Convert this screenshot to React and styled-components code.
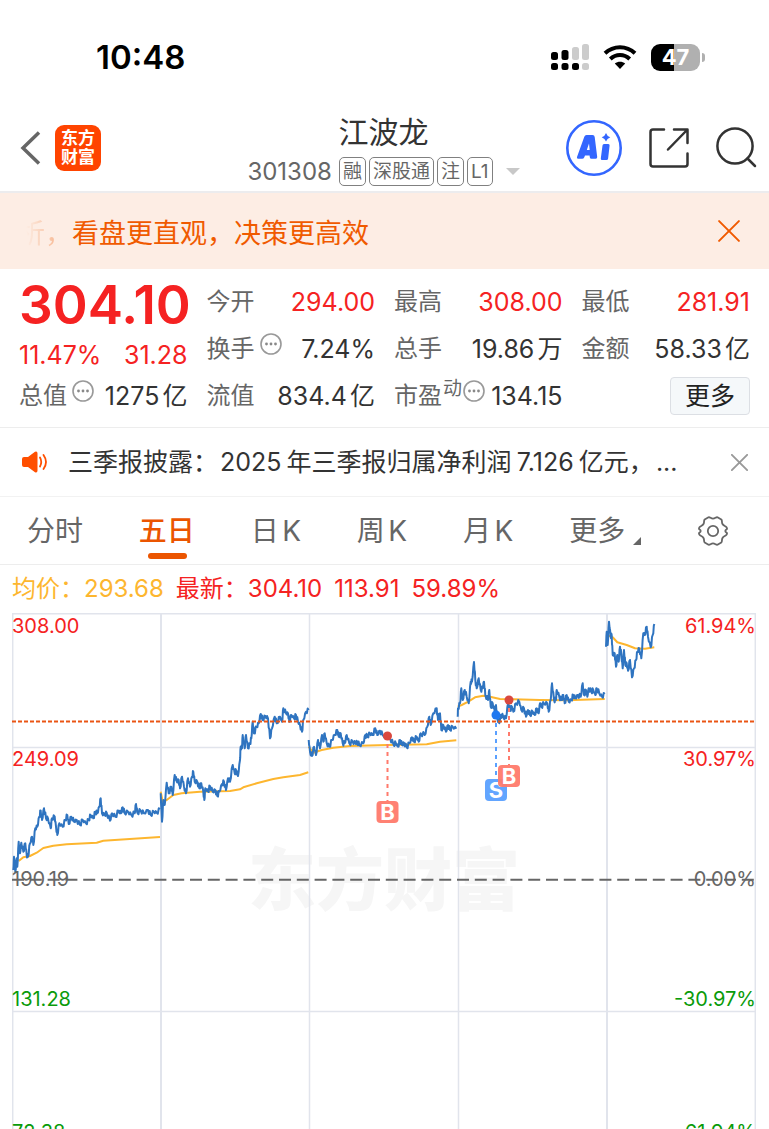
import React from "react";
import styled, { createGlobalStyle } from "styled-components";

const Global = createGlobalStyle`
  *, *::before, *::after { box-sizing: border-box; }
  body {
    margin: 0;
    background: #fff;
    color: #333;
    font-family: Inter, "Noto Sans CJK SC", sans-serif;
    text-autospace: normal;
    -webkit-font-smoothing: antialiased;
  }
  button {
    margin: 0;
    padding: 0;
    border: 0;
    background: none;
    color: inherit;
    font: inherit;
    cursor: pointer;
  }
  svg { display: block; }
`;

const Page = styled.div`
  display: flex;
  flex-direction: column;
  height: 100vh;
  overflow: hidden;
`;

const StatusBar = styled.div`
  display: flex;
  flex: none;
  align-items: center;
  justify-content: space-between;
  height: 104px;
  padding: 10px 69px 0 96px;
`;
const Clock = styled.time`
  color: #000;
  font-size: 33px;
  font-weight: 600;
  line-height: 40px;
`;
const StatusIcons = styled.div`
  display: flex;
  align-items: center;
  gap: 14px;
`;
const Battery = styled.div`
  position: relative;
  width: 49px;
  height: 27px;
  border-radius: 9px;
  background: linear-gradient(90deg, #000 47%, #b0b0b0 47%);
  color: #fff;
  font-size: 22px;
  font-weight: 700;
  line-height: 27px;
  text-align: center;
  &::after {
    content: "";
    position: absolute;
    top: 9px;
    right: -5px;
    width: 3px;
    height: 9px;
    border-radius: 0 4px 4px 0;
    background: #b0b0b0;
  }
`;

const Header = styled.header`
  display: grid;
  flex: none;
  grid-template-columns: 1fr auto 1fr;
  align-items: center;
  height: 89px;
  padding: 0 12px 0 20px;
  border-bottom: 2px solid #ececee;
`;
const HeaderSide = styled.div`
  display: flex;
  align-items: center;
  justify-content: ${(p) => (p.$end ? "flex-end" : "flex-start")};
  gap: ${(p) => (p.$end ? 27 : 14)}px;
`;
const Brand = styled.a`
  display: grid;
  place-content: center;
  width: 46px;
  height: 46px;
  border-radius: 9px;
  background: #ff4400;
  color: #fff;
  font-size: 17px;
  font-weight: 700;
  line-height: 19px;
  text-align: center;
  text-decoration: none;
`;
const Title = styled.div`
  display: flex;
  flex-direction: column;
  align-items: center;
  padding: 2px 10px 0 0;
`;
const StockName = styled.h1`
  margin: 0;
  color: #333;
  font-size: 30px;
  font-weight: 400;
  line-height: 46px;
`;
const CodeRow = styled.div`
  display: flex;
  align-items: center;
  gap: 3px;
  color: #666;
`;
const Code = styled.span`
  margin-right: 4px;
  font-size: 24px;
  line-height: 34px;
`;
const Tag = styled.span`
  height: 29px;
  padding: 0 3px;
  border: 1px solid #808080;
  border-radius: 5px;
  font-size: 19px;
  line-height: 27px;
`;
const Caret = styled.span`
  margin-left: 10px;
  border: 7px solid transparent;
  border-top-color: #c8c8c8;
  border-bottom: 0;
`;

const Notice = styled.section`
  display: flex;
  flex: none;
  align-items: center;
  justify-content: space-between;
  height: 76px;
  padding: 0 29px 0 18px;
  background: #fdede4;
  color: #f05a00;
`;
const NoticeText = styled.p`
  margin: 0;
  padding-top: 5px;
  font-size: 27px;
  line-height: 40px;
  white-space: nowrap;
`;
const Fading = styled.span`
  background: linear-gradient(90deg, rgba(240, 90, 0, 0) 8px, rgba(240, 90, 0, 0.45) 48px);
  background-clip: text;
  color: transparent;
`;

const Quote = styled.section`
  display: grid;
  flex: none;
  grid-template-columns: repeat(4, minmax(0, 1fr));
  grid-template-rows: repeat(3, 47px);
  column-gap: 19px;
  height: 159px;
  padding: 9px 19px 0 19px;
  border-bottom: 1px solid #ededed;
`;
const PriceBox = styled.div`
  display: flex;
  flex-direction: column;
  grid-row: 1 / 3;
  color: #f52222;
`;
const Price = styled.strong`
  font-size: 53px;
  font-weight: 600;
  line-height: 54px;
`;
const Change = styled.div`
  display: flex;
  justify-content: space-between;
  font-size: 25px;
  line-height: 46px;
`;
const Field = styled.div`
  display: flex;
  align-items: center;
  justify-content: space-between;
  white-space: nowrap;
`;
const Label = styled.span`
  display: flex;
  align-items: center;
  gap: 5px;
  color: #666;
  font-size: 24px;
  line-height: 36px;
`;
const Superscript = styled.span`
  align-self: flex-start;
  margin: 0 -4px;
  font-size: 19px;
  line-height: 22px;
`;
const Hint = styled.button`
  align-self: flex-start;
  padding-top: 2px;
`;
const Value = styled.span`
  color: ${(p) => (p.$up ? "#f52222" : "#333")};
  font-size: 25px;
  line-height: 36px;
`;
const MoreButton = styled.button`
  align-self: center;
  justify-self: end;
  width: 80px;
  height: 38px;
  border: 1px solid #dcdfe4;
  border-radius: 4px;
  background: #f5f8fa;
  color: #222;
  font-size: 25px;
  line-height: 36px;
`;

const News = styled.section`
  display: flex;
  flex: none;
  align-items: center;
  height: 69px;
  padding: 0 21px 0 22px;
  border-bottom: 1px solid #f2f2f2;
`;
const Headline = styled.p`
  flex: 1;
  margin: 0 20px 0 20px;
  color: #333;
  font-size: 25px;
  line-height: 36px;
  white-space: nowrap;
`;
const Figure = styled.span`
  margin: 0 2px;
`;

const Tabs = styled.nav`
  display: flex;
  flex: none;
  align-items: stretch;
  justify-content: space-between;
  height: 68px;
  padding: 0 40px 0 27px;
  border-bottom: 1px solid #ededed;
`;
const Tab = styled.button`
  position: relative;
  color: ${(p) => (p.$active ? "#eb5500" : "#666")};
  font-size: 28px;
  font-weight: ${(p) => (p.$active ? 500 : 400)};
  line-height: 40px;
  &::after {
    content: "";
    display: ${(p) => (p.$active ? "block" : "none")};
    position: absolute;
    bottom: 5px;
    left: calc(50% - 19px);
    width: 39px;
    height: 6px;
    border-radius: 3px;
    background: #eb5500;
  }
`;
const MoreTab = styled(Tab)`
  display: flex;
  align-items: center;
  gap: 8px;
`;
const Corner = styled.span`
  margin-top: 20px;
  border-bottom: 8px solid #666;
  border-left: 8px solid transparent;
`;

const Legend = styled.div`
  display: flex;
  flex: none;
  align-items: center;
  gap: 12px;
  height: 48px;
  padding: 0 12px;
  color: #f52222;
  font-size: 24px;
  line-height: 32px;
`;
const Average = styled.span`
  color: #fdb62f;
`;

const ChartBox = styled.section`
  position: relative;
  flex: none;
  height: 532px;
  margin: 0 13px 0 12px;
`;
const Plot = styled.svg`
  width: 100%;
  height: 100%;
`;
const AxisLabel = styled.span`
  position: absolute;
  top: ${(p) => p.$top}px;
  ${(p) => (p.$right ? "right: 0;" : "left: 0;")}
  color: ${(p) => p.$color};
  font-size: 20px;
  line-height: 24px;
`;

const HintIcon = () => (
  <svg width="22" height="22" viewBox="0 0 22 22" fill="none" stroke="#999">
    <circle cx="11" cy="11" r="10" strokeWidth="1.6" />
    <g fill="#888" stroke="none">
      <circle cx="6.5" cy="11" r="1.4" />
      <circle cx="11" cy="11" r="1.4" />
      <circle cx="15.5" cy="11" r="1.4" />
    </g>
  </svg>
);

const Cross = ({ size, color, width }) => (
  <svg width={size} height={size} viewBox="0 0 20 20" fill="none" stroke={color} strokeWidth={width} strokeLinecap="round">
    <path d="M1 1 19 19M19 1 1 19" />
  </svg>
);

const SignalIcon = () => (
  <svg width="38" height="28" viewBox="0 0 38 28">
    <g fill="#000">
      <rect x="0" y="9" width="7" height="8" rx="2.5" />
      <rect x="10.5" y="7" width="7" height="10" rx="2.5" />
      <rect x="0" y="20" width="7" height="7" rx="2.5" />
      <rect x="10.5" y="20" width="7" height="7" rx="2.5" />
      <rect x="21" y="20" width="7" height="7" rx="2.5" />
    </g>
    <g fill="#ccc">
      <rect x="21" y="4" width="7" height="13" rx="2.5" />
      <rect x="31" y="1" width="7" height="16" rx="2.5" />
      <rect x="31" y="20" width="7" height="7" rx="2.5" />
    </g>
  </svg>
);

const WifiIcon = () => (
  <svg width="34" height="26" viewBox="0 0 34 26" fill="none" stroke="#000" strokeWidth="4">
    <path d="M2 9.3C10.5 1.2 23.5 1.2 32 9.3" />
    <path d="M7.3 15C12.9 9.7 21.1 9.7 26.7 15" />
    <path d="M17 25 11.8 19.6C14.8 17 19.2 17 22.2 19.6Z" fill="#000" stroke="none" />
  </svg>
);

const AiIcon = () => (
  <svg width="56" height="56" viewBox="0 0 56 56">
    <circle cx="28" cy="28" r="26.7" fill="none" stroke="#3366ff" strokeWidth="2.6" />
    <g fill="#3366ff">
      <path
        fillRule="evenodd"
        d="M20.5 15h6q2 0 2.200 1.900l2.500 20.100q.2 1.800-1.500 1.800h-4.200q-1.500 0-1.700-1.500l-.2-1.700h-4.600l-.7 1.700q-.6 1.500-2.200 1.500h-3.900q-1.900 0-1.200-1.800l7.300-20.300q.6-1.700 2.200-1.700zM23 23.500l-2.200 6.500h2.900z"
      />
      <path d="M38 24h4.300q1.500 0 1.300 1.500l-1.500 13q-.2 1.500-1.600 1.500h-4.300q-1.600 0-1.400-1.500l1.700-13q.2-1.500 1.500-1.500z" />
      <path d="M40 13q1 3.200 4.300 4.300-3.300 1.100-4.300 4.300-1-3.200-4.300-4.300 3.300-1.100 4.300-4.300z" />
    </g>
  </svg>
);

const ShareIcon = () => (
  <svg width="40" height="40" viewBox="0 0 40 40" fill="none" stroke="#333" strokeWidth="2.5" strokeLinecap="round" strokeLinejoin="round">
    <path d="M15 1.5H4Q1.500 1.500 1.500 4V36Q1.500 38.500 4 38.500H36Q38.500 38.500 38.500 36V25.500" />
    <path d="M25 1.500H38.500V15M38 2 19 21.500" />
  </svg>
);

const SearchIcon = () => (
  <svg width="41" height="41" viewBox="0 0 41 41" fill="none" stroke="#333" strokeWidth="2.5" strokeLinecap="round">
    <circle cx="19" cy="19" r="17.6" />
    <path d="M31.500 31.500 39 39" />
  </svg>
);

const SpeakerIcon = () => (
  <svg width="26" height="22" viewBox="0 0 26 22">
    <path d="M2 6h4l7-5.200q2.500-.8 2.500 1.700v17q0 2.500-2.500 1.700L6 16H2q-2 0-2-2V8q0-2 2-2z" fill="#ff4f00" />
    <path d="M18 6.500q2.500 4.500 0 9M21.500 4q5 7 0 14" fill="none" stroke="#ff4f00" strokeWidth="1.8" strokeLinecap="round" />
  </svg>
);

const GearIcon = () => (
  <svg width="32" height="30" viewBox="0 0 32 30" fill="none" stroke="#666" strokeWidth="1.8" strokeLinejoin="round">
    <path d="M11.500 1.300C13 .8 13.800 2.600 16 2.600S19 .8 20.500 1.300L24.300 3.500C25.500 4.600 24.400 6 25.500 8S28.500 9.800 29.500 11.200C31.300 13.800 28.300 13 28.300 15S31.300 16.200 29.500 18.800C28.500 20.200 26.600 20 25.500 22S25.500 25.400 24.300 26.500L20.500 28.700C19 29.200 18.200 27.400 16 27.400S13 29.200 11.500 28.700L7.700 26.500C6.500 25.400 7.600 24 6.500 22S3.500 20.200 2.500 18.800C.7 16.200 3.700 17 3.700 15S.7 13.800 2.500 11.200C3.500 9.800 5.400 10 6.500 8S6.500 4.600 7.700 3.500Z" />
    <circle cx="16" cy="15" r="5.200" />
  </svg>
);

/* Samples are stored as x,y pairs on a grid three times finer than the plot. */
const parse = (text, shift) =>
  text.split(" ").map((pair) => {
    const [x, y] = pair.split(",").map(Number);
    return [(x + shift) / 3 - 12, y / 3 - 13];
  });

const toPath = (points) => "M" + points.map(([x, y]) => x.toFixed(1) + " " + y.toFixed(1)).join("L");

const withTicks = (points) => {
  const out = [];
  points.forEach(([x, y], i) => {
    out.push([x, y]);
    const next = points[i + 1];
    if (!next) return;
    const sway = 1 + 1.4 * Math.abs(Math.sin(i * 7.3));
    out.push([x + (next[0] - x) * 0.35, y + (next[1] - y) * 0.35 + sway]);
    out.push([x + (next[0] - x) * 0.65, y + (next[1] - y) * 0.65 - sway]);
  });
  return out;
};

const PRICES = [
  [0, "40,810 42,770 46,815 50,775 52,800 56,725 60,760 64,728 70,755 76,730 80,765 84,770 90,730 96,710 100,735 106,685 112,680 118,650 122,632 126,660 132,625 138,655 144,655 152,685 156,655 164,650 168,680 172,705 178,670 188,680 196,660 202,645 206,672 214,650 222,665 230,660 240,675 248,660 258,670 266,660 272,645 280,655 286,635 292,640 298,620 302,595 306,640 314,645 320,638 330,662 336,640 346,650 356,632 362,640 368,622 374,640 384,635 394,645 404,640 408,612 412,638 422,632 432,640 444,630 452,645 462,635 470,638 480,628"],
  [0, "482,580 486,665 490,600 494,615 500,548 506,580 514,560 518,585 524,525 530,545 536,540 540,565 546,530 552,560 558,580 564,535 570,560 576,530 580,515 584,545 592,545 598,565 604,550 610,575 613,600 616,565 624,575 630,558 638,575 646,570 652,588 658,575 666,552 672,545 678,570 684,535 690,545 698,495 704,520 708,510 714,528 720,480 722,440 726,445 728,405 734,445 738,405 744,445 750,430 754,415 758,365 762,400 770,380 776,370 782,342 788,360 796,348 804,355 810,415 816,385 824,350 830,370 840,350 846,365 850,325 858,340 864,340 868,365 874,345 882,355 888,345 894,365 900,375 906,395 910,360 918,335 926,330"],
  [900, "26,420 30,455 36,468 42,440 48,465 54,420 60,445 66,405 70,425 74,400 80,430 88,440 96,420 104,405 112,390 116,410 122,400 128,430 134,430 140,405 148,430 158,425 166,430 172,425 178,435 190,430 196,405 202,410 210,400 218,405 226,385 232,405 240,392 248,405 262,408 270,415 280,432 288,430 294,440 300,420 306,435 312,428 320,442 328,430 336,412 342,425 350,410 356,425 362,400 374,405 382,380 388,350 392,375 400,340 410,325 414,360 420,340 424,390 430,375 438,395 444,375 450,390 458,380 469,386"],
  [900, "473,350 474,325 480,310 484,265 488,300 494,270 500,290 506,310 512,245 516,245 522,186 526,240 530,265 536,235 542,270 548,265 552,245 556,285 564,300 568,270 572,320 578,310 584,335 588,315 592,355 598,370 602,345 610,350 618,355 624,310 630,330 636,320 640,335 648,310 658,305 664,330 672,325 678,350 684,330 690,345 698,335 704,345 710,325 716,340 720,310 724,320 732,310 742,310 746,335 752,300 756,250 762,300 768,300 770,270 778,290 784,300 790,285 794,310 800,285 806,305 814,300 820,285 826,295 834,285 842,290 848,250 852,285 858,270 862,290 866,265 874,275 880,270 886,285 890,265 898,280 906,290 914,282"],
  [1560, "258,140 260,95 263,135 267,65 272,110 275,105 278,165 284,160 288,200 292,165 296,185 300,140 304,165 308,205 312,150 316,195 320,190 324,212 330,180 336,232 342,205 348,180 352,155 358,145 364,175 370,100 374,105 380,80 384,110 392,142 398,105 403,72"],
];
const AVERAGES = [
  [0, "56,783 70,772 90,768 110,758 130,744 160,737 200,733 290,728 310,722 480,711"],
  [0, "482,575 488,605 500,600 520,585 545,580 600,575 690,573 720,568 730,562 770,550 820,537 850,532 900,525 925,517"],
  [900, "26,440 40,458 65,450 100,443 150,438 262,435 380,433 420,425 469,421"],
  [900, "473,320 485,315 505,305 525,292 550,287 570,290 600,297 640,298 720,300 800,301 914,297"],
  [1560, "262,105 278,112 292,127 320,135 345,145 375,146 403,142"],
];

const RED = "#ff7a6c";
const BLUE = "#5aa0ff";
const Marker = ({ x, from, to, letter, color, dot }) => (
  <g>
    <path d={`M${x} ${from}V${to}`} stroke={color} strokeWidth="2" strokeDasharray="4 4" />
    <circle cx={x} cy={from} r="4.5" fill={dot} />
    <rect x={x - 11} y={to} width="22" height="22" rx="4" fill={color} fillOpacity="0.95" />
    <text x={x} y={to + 19} fill="#fff" fontSize="22" fontWeight="700" textAnchor="middle">
      {letter}
    </text>
  </g>
);

const Chart = () => (
  <ChartBox>
    <Plot viewBox="0 0 744 532" preserveAspectRatio="none" fill="none">
      <text x="372" y="292" fill="#f6f6f6" fontSize="68" fontWeight="900" textAnchor="middle">
        东方财富
      </text>
      <g stroke="#e1e4ec">
        <path strokeWidth="1.5" d="M0 .7H744M0 134.500H744M0 398.500H744M.7 0V532M297.500 0V532M446.500 0V532M743.300 0V532" />
        <path strokeWidth="2" d="M149 0V532M595 0V532" />
      </g>
      <g stroke="#fdb62f" strokeWidth="2" strokeLinejoin="round">
        {AVERAGES.map(([shift, text], i) => (
          <path key={i} d={toPath(parse(text, shift))} />
        ))}
      </g>
      <g stroke="#2f74c0" strokeWidth="2" strokeLinejoin="round">
        {PRICES.map(([shift, text], i) => (
          <path key={i} d={toPath(withTicks(parse(text, shift)))} />
        ))}
      </g>
      <path d="M0 108.500H744" stroke="#ea5514" strokeWidth="2" strokeDasharray="4 2" />
      <path d="M0 266.700H744" stroke="#666" strokeWidth="2" strokeDasharray="12 5.800" />
      <Marker x={375.5} from={123} to={188} letter="B" color={RED} dot="#d9483f" />
      <Marker x={484} from={102} to={166} letter="S" color={BLUE} dot="#1f78f0" />
      <Marker x={497} from={87} to={152} letter="B" color={RED} dot="#d9483f" />
    </Plot>
    {[
      [1, "308.00", "61.94%", "#f52222"],
      [134, "249.09", "30.97%", "#f52222"],
      [254, "190.19", "0.00%", "#666"],
      [374, "131.28", "-30.97%", "#0a9b0a"],
      [507, "72.38", "-61.94%", "#0a9b0a"],
    ].map(([top, price, percent, color]) => (
      <React.Fragment key={top}>
        <AxisLabel $top={top} $color={color}>{price}</AxisLabel>
        <AxisLabel $top={top} $color={color} $right>{percent}</AxisLabel>
      </React.Fragment>
    ))}
  </ChartBox>
);

const QuoteField = ({ label, value, up, hint, sup }) => (
  <Field>
    <Label>
      {label}
      {sup && <Superscript>{sup}</Superscript>}
      {hint && (
        <Hint aria-label={label + "说明"}>
          <HintIcon />
        </Hint>
      )}
    </Label>
    <Value $up={up}>{value}</Value>
  </Field>
);

export default function App() {
  return (
    <Page>
      <Global />
      <StatusBar>
        <Clock>10:48</Clock>
        <StatusIcons>
          <SignalIcon />
          <WifiIcon />
          <Battery>47</Battery>
        </StatusIcons>
      </StatusBar>

      <Header>
        <HeaderSide>
          <button aria-label="返回">
            <svg width="21" height="34" viewBox="0 0 21 34" fill="none" stroke="#666" strokeWidth="3.5">
              <path d="M19 1.500 3 17 19 32.500" />
            </svg>
          </button>
          <Brand href="#home">东方<br />财富</Brand>
        </HeaderSide>
        <Title>
          <StockName>江波龙</StockName>
          <CodeRow>
            <Code>301308</Code>
            <Tag>融</Tag>
            <Tag>深股通</Tag>
            <Tag>注</Tag>
            <Tag>L1</Tag>
            <Caret />
          </CodeRow>
        </Title>
        <HeaderSide $end>
          <button aria-label="AI"><AiIcon /></button>
          <button aria-label="分享"><ShareIcon /></button>
          <button aria-label="搜索"><SearchIcon /></button>
        </HeaderSide>
      </Header>

      <Notice>
        <NoticeText>
          <Fading>析，</Fading>看盘更直观，决策更高效
        </NoticeText>
        <button aria-label="关闭提示">
          <Cross size={22} color="#f05a00" width={1.8} />
        </button>
      </Notice>

      <Quote>
        <PriceBox>
          <Price>304.10</Price>
          <Change>
            <span>11.47%</span>
            <span>31.28</span>
          </Change>
        </PriceBox>
        <QuoteField label="今开" value="294.00" up />
        <QuoteField label="最高" value="308.00" up />
        <QuoteField label="最低" value="281.91" up />
        <QuoteField label="换手" value="7.24%" hint />
        <QuoteField label="总手" value="19.86万" />
        <QuoteField label="金额" value="58.33亿" />
        <QuoteField label="总值" value="1275亿" hint />
        <QuoteField label="流值" value="834.4亿" />
        <QuoteField label="市盈" sup="动" value="134.15" hint />
        <MoreButton>更多</MoreButton>
      </Quote>

      <News>
        <SpeakerIcon />
        <Headline>
          三季报披露：<Figure>2025</Figure>年三季报归属净利润<Figure>7.126</Figure>亿元，<Figure>...</Figure>
        </Headline>
        <button aria-label="关闭公告">
          <Cross size={17} color="#999" width={2.2} />
        </button>
      </News>

      <Tabs>
        <Tab>分时</Tab>
        <Tab $active>五日</Tab>
        <Tab>日K</Tab>
        <Tab>周K</Tab>
        <Tab>月K</Tab>
        <MoreTab>
          更多
          <Corner />
        </MoreTab>
        <button aria-label="设置"><GearIcon /></button>
      </Tabs>

      <Legend>
        <Average>均价：293.68</Average>
        <span>最新：304.10</span>
        <span>113.91</span>
        <span>59.89%</span>
      </Legend>

      <Chart />
    </Page>
  );
}
